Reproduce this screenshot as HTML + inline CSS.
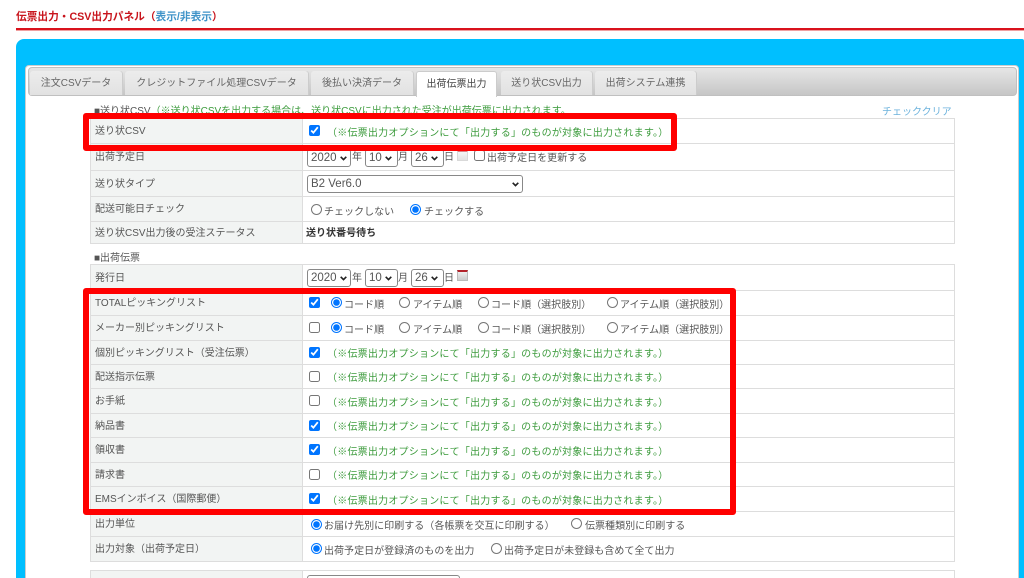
<!DOCTYPE html>
<html lang="ja">
<head>
<meta charset="utf-8">
<title>伝票出力・CSV出力パネル</title>
<style>
html,body{margin:0;padding:0;width:1024px;height:578px;overflow:hidden;background:#fff}
body{position:relative;font-family:"Liberation Sans","Noto Sans CJK JP",sans-serif;font-size:10px;color:#555}
div,span,input,select,a,svg{position:absolute;box-sizing:border-box}
.title{left:16px;top:9px;font-size:10.7px;line-height:16px;font-weight:bold;color:#c8141c;white-space:nowrap}
.title b{position:static;color:#3f93c8;font-weight:bold}
.line{left:16px;top:28px;width:1008px;height:3px;background:#d9121c;border-bottom:1px solid #f0a0a0}
.blue{left:16px;top:39px;width:1008px;height:560px;background:#00bfff;border-radius:8px 2px 0 0}
.white{left:25px;top:65px;width:994px;height:530px;background:#fff;border:1px solid #ccc;border-radius:4px}
.bar{left:28px;top:67px;width:989px;height:29px;background:linear-gradient(#e6e6e6,#c6c6c6);border:1px solid #c0c0c0;border-radius:4px}
.tab{top:71px;height:24px;line-height:25px;text-align:center;background:linear-gradient(#ececec,#e2e2e2);border-radius:3px 3px 0 0;color:#666;white-space:nowrap;box-shadow:1px 0 0 #ccc}
.tab.on{top:71px;height:26px;background:#fff;color:#444;border:1px solid #ccc;border-bottom:0;box-shadow:none}
.h{left:94px;white-space:nowrap;line-height:14px}
.h i{font-style:normal;color:#3c9b3c}
.clear{left:882px;top:106px;line-height:14px;color:#6cb2dc;white-space:nowrap}
.r{left:90px;width:865px;border:1px solid #ddd;border-top:0;background:#fff}
.r.first{border-top:1px solid #ddd}
.r>.l{left:0;top:0;bottom:0;width:212px;background:#f2f4f3;border-right:1px solid #ddd;padding-left:4px;white-space:nowrap;display:flex;align-items:center;padding-bottom:3px;color:#555}
.t{white-space:nowrap;line-height:14px;color:#555;letter-spacing:.03px}
.g{left:236px;white-space:nowrap;line-height:14px;color:#3c9b3c;letter-spacing:.22px}
input{margin:0;padding:0}
input[type=checkbox],input[type=radio]{width:11px;height:11px}
select{appearance:none;-webkit-appearance:none;font-family:"Liberation Sans",sans-serif;font-size:11.5px;color:#555;background:#fff;border:1px solid #888;border-radius:3px;padding:0 0 0 3px;height:18px}
.ar{width:7px;height:5px;overflow:visible}
.cal{width:11px;height:11px;background:linear-gradient(#eee,#ccc);border:1px solid #bbb;border-top:2px solid #b3222a}
.cal.f{opacity:.55}
.red{border:6px solid #f00;border-radius:3px;background:transparent}
</style>
</head>
<body>
<div class="title">伝票出力・CSV出力パネル（<b>表示/非表示</b>）</div>
<div class="line"></div>
<div class="blue"></div>
<div class="white"></div>
<div class="bar"></div>
<div class="tab" style="left:30px;width:92px">注文CSVデータ</div>
<div class="tab" style="left:125px;width:183px">クレジットファイル処理CSVデータ</div>
<div class="tab" style="left:311px;width:102px">後払い決済データ</div>
<div class="tab on" style="left:416px;width:81px">出荷伝票出力</div>
<div class="tab" style="left:501px;width:91px">送り状CSV出力</div>
<div class="tab" style="left:595px;width:101px">出荷システム連携</div>

<div class="h" style="top:105px">■送り状CSV<i>（※送り状CSVを出力する場合は、送り状CSVに出力された受注が出荷伝票に出力されます。</i></div>
<a class="clear">チェッククリア</a>

<div class="r first" style="top:118px;height:26px"><div class="l">送り状CSV</div>
<input type="checkbox" checked style="left:218px;top:6px"><span class="g" style="top:8px">（※伝票出力オプションにて「出力する」のものが対象に出力されます。）</span></div>

<div class="r" style="top:144px;height:27px"><div class="l">出荷予定日</div>
<select style="left:216px;top:5px;width:44px"><option>2020</option></select>
<svg class="ar" style="left:249px;top:12px" viewBox="0 0 7 5"><path d="M.7.8 3.5 3.6 6.3.8" fill="none" stroke="#222" stroke-width="1.6"/></svg>
<span class="t" style="left:261px;top:7px">年</span>
<select style="left:274px;top:5px;width:33px"><option>10</option></select>
<svg class="ar" style="left:294px;top:12px" viewBox="0 0 7 5"><path d="M.7.8 3.5 3.6 6.3.8" fill="none" stroke="#222" stroke-width="1.6"/></svg>
<span class="t" style="left:307px;top:7px">月</span>
<select style="left:320px;top:5px;width:33px"><option>26</option></select>
<svg class="ar" style="left:340px;top:12px" viewBox="0 0 7 5"><path d="M.7.8 3.5 3.6 6.3.8" fill="none" stroke="#222" stroke-width="1.6"/></svg>
<span class="t" style="left:353px;top:7px">日</span>
<div class="cal f" style="left:366px;top:6px"></div>
<input type="checkbox" style="left:383px;top:6px"><span class="t" style="left:396px;top:8px">出荷予定日を更新する</span></div>

<div class="r" style="top:171px;height:26px"><div class="l">送り状タイプ</div>
<select style="left:216px;top:4px;width:216px"><option>B2 Ver6.0</option></select>
<svg class="ar" style="left:421px;top:11px" viewBox="0 0 7 5"><path d="M.7.8 3.5 3.6 6.3.8" fill="none" stroke="#222" stroke-width="1.6"/></svg></div>

<div class="r" style="top:197px;height:25px"><div class="l">配送可能日チェック</div>
<input type="radio" style="left:220px;top:7px"><span class="t" style="left:233px;top:9px">チェックしない</span>
<input type="radio" checked style="left:319px;top:7px"><span class="t" style="left:333px;top:9px">チェックする</span></div>

<div class="r" style="top:222px;height:22px"><div class="l">送り状CSV出力後の受注ステータス</div>
<span class="t" style="left:215px;top:5px;font-weight:bold;color:#333">送り状番号待ち</span></div>

<div class="h" style="top:252px">■出荷伝票</div>

<div class="r first" style="top:264px;height:27px"><div class="l">発行日</div>
<select style="left:216px;top:4px;width:44px"><option>2020</option></select>
<svg class="ar" style="left:249px;top:11px" viewBox="0 0 7 5"><path d="M.7.8 3.5 3.6 6.3.8" fill="none" stroke="#222" stroke-width="1.6"/></svg>
<span class="t" style="left:261px;top:7px">年</span>
<select style="left:274px;top:4px;width:33px"><option>10</option></select>
<svg class="ar" style="left:294px;top:11px" viewBox="0 0 7 5"><path d="M.7.8 3.5 3.6 6.3.8" fill="none" stroke="#222" stroke-width="1.6"/></svg>
<span class="t" style="left:307px;top:7px">月</span>
<select style="left:320px;top:4px;width:33px"><option>26</option></select>
<svg class="ar" style="left:340px;top:11px" viewBox="0 0 7 5"><path d="M.7.8 3.5 3.6 6.3.8" fill="none" stroke="#222" stroke-width="1.6"/></svg>
<span class="t" style="left:353px;top:7px">日</span>
<div class="cal" style="left:366px;top:5px"></div></div>

<div class="r" style="top:291px;height:25px"><div class="l">TOTALピッキングリスト</div>
<input type="checkbox" checked style="left:218px;top:6px">
<input type="radio" checked style="left:240px;top:6px"><span class="t" style="left:253px;top:8px">コード順</span>
<input type="radio" style="left:308px;top:6px"><span class="t" style="left:322px;top:8px">アイテム順</span>
<input type="radio" style="left:387px;top:6px"><span class="t" style="left:400px;top:8px">コード順（選択肢別）</span>
<input type="radio" style="left:516px;top:6px"><span class="t" style="left:529px;top:8px">アイテム順（選択肢別）</span></div>

<div class="r" style="top:316px;height:25px"><div class="l">メーカー別ピッキングリスト</div>
<input type="checkbox" style="left:218px;top:6px">
<input type="radio" checked style="left:240px;top:6px"><span class="t" style="left:253px;top:8px">コード順</span>
<input type="radio" style="left:308px;top:6px"><span class="t" style="left:322px;top:8px">アイテム順</span>
<input type="radio" style="left:387px;top:6px"><span class="t" style="left:400px;top:8px">コード順（選択肢別）</span>
<input type="radio" style="left:516px;top:6px"><span class="t" style="left:529px;top:8px">アイテム順（選択肢別）</span></div>

<div class="r" style="top:341px;height:24px"><div class="l">個別ピッキングリスト（受注伝票）</div>
<input type="checkbox" checked style="left:218px;top:6px"><span class="g" style="top:7px">（※伝票出力オプションにて「出力する」のものが対象に出力されます。）</span></div>

<div class="r" style="top:365px;height:24px"><div class="l">配送指示伝票</div>
<input type="checkbox" style="left:218px;top:6px"><span class="g" style="top:7px">（※伝票出力オプションにて「出力する」のものが対象に出力されます。）</span></div>

<div class="r" style="top:389px;height:25px"><div class="l">お手紙</div>
<input type="checkbox" style="left:218px;top:6px"><span class="g" style="top:8px">（※伝票出力オプションにて「出力する」のものが対象に出力されます。）</span></div>

<div class="r" style="top:414px;height:24px"><div class="l">納品書</div>
<input type="checkbox" checked style="left:218px;top:6px"><span class="g" style="top:7px">（※伝票出力オプションにて「出力する」のものが対象に出力されます。）</span></div>

<div class="r" style="top:438px;height:25px"><div class="l">領収書</div>
<input type="checkbox" checked style="left:218px;top:6px"><span class="g" style="top:8px">（※伝票出力オプションにて「出力する」のものが対象に出力されます。）</span></div>

<div class="r" style="top:463px;height:24px"><div class="l">請求書</div>
<input type="checkbox" style="left:218px;top:6px"><span class="g" style="top:7px">（※伝票出力オプションにて「出力する」のものが対象に出力されます。）</span></div>

<div class="r" style="top:487px;height:25px"><div class="l">EMSインボイス（国際郵便）</div>
<input type="checkbox" checked style="left:218px;top:6px"><span class="g" style="top:8px">（※伝票出力オプションにて「出力する」のものが対象に出力されます。）</span></div>

<div class="r" style="top:512px;height:25px"><div class="l">出力単位</div>
<input type="radio" checked style="left:220px;top:7px"><span class="t" style="left:233px;top:8px">お届け先別に印刷する（各帳票を交互に印刷する）</span>
<input type="radio" style="left:480px;top:6px"><span class="t" style="left:494px;top:8px">伝票種類別に印刷する</span></div>

<div class="r" style="top:537px;height:25px"><div class="l">出力対象（出荷予定日）</div>
<input type="radio" checked style="left:220px;top:6px"><span class="t" style="left:233px;top:8px">出荷予定日が登録済のものを出力</span>
<input type="radio" style="left:400px;top:6px"><span class="t" style="left:413px;top:8px">出荷予定日が未登録も含めて全て出力</span></div>

<div class="r first" style="top:570px;height:30px"><div class="l"></div>
<select style="left:216px;top:4px;width:153px"><option></option></select></div>

<div class="red" style="left:83px;top:113px;width:594px;height:38px"></div>
<div class="red" style="left:83px;top:288px;width:653px;height:227px"></div>
</body>
</html>
